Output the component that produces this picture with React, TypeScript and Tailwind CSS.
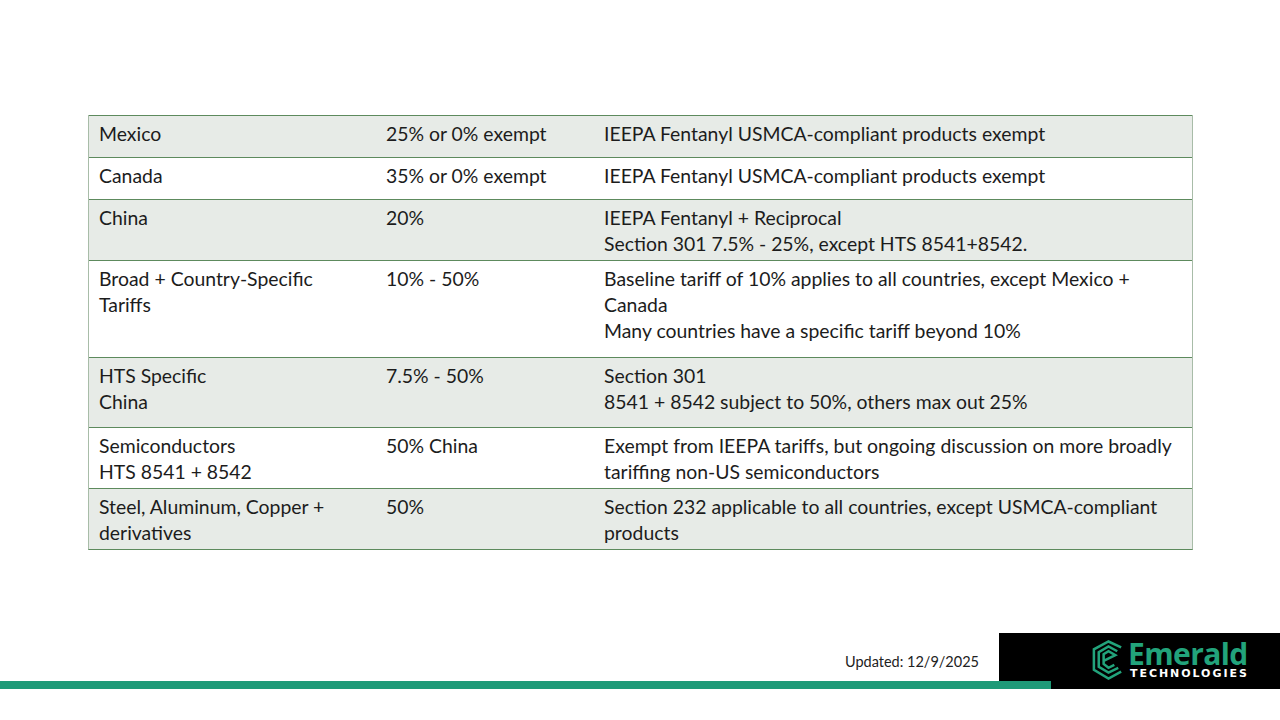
import React from 'react';

const rows = [
  { h: 'h-[42px]', a: ['Mexico'], b: ['25% or 0% exempt'], c: ['IEEPA Fentanyl USMCA-compliant products exempt'], shade: true },
  { h: 'h-[42px]', a: ['Canada'], b: ['35% or 0% exempt'], c: ['IEEPA Fentanyl USMCA-compliant products exempt'], shade: false },
  {
    h: 'h-[61px]',
    a: ['China'],
    b: ['20%'],
    c: ['IEEPA Fentanyl + Reciprocal', 'Section 301 7.5% - 25%, except HTS 8541+8542.'],
    shade: true,
  },
  {
    h: 'h-[97px]',
    a: ['Broad + Country-Specific Tariffs'],
    b: ['10% - 50%'],
    c: ['Baseline tariff of 10% applies to all countries, except Mexico + Canada', 'Many countries have a specific tariff beyond 10%'],
    shade: false,
  },
  {
    h: 'h-[70px]',
    a: ['HTS Specific', 'China'],
    b: ['7.5% - 50%'],
    c: ['Section 301', '8541 + 8542 subject to 50%, others max out 25%'],
    shade: true,
  },
  {
    h: 'h-[61px]',
    a: ['Semiconductors', 'HTS 8541 + 8542'],
    b: ['50% China'],
    c: ['Exempt from IEEPA tariffs, but ongoing discussion on more broadly tariffing non-US semiconductors'],
    shade: false,
  },
  {
    h: 'h-[61px]',
    a: ['Steel, Aluminum, Copper + derivatives'],
    b: ['50%'],
    c: ['Section 232 applicable to all countries, except USMCA-compliant products'],
    shade: true,
  },
];

const Lines = ({ items }: { items: string[] }) => (
  <>
    {items.map((t, i) => (
      <p key={i}>{t}</p>
    ))}
  </>
);

const Logo = () => (
  <div className="flex items-center gap-[1px]">
    <svg width="37" height="40" viewBox="0 0 38 40" fill="none" stroke="#22a37b" strokeWidth="2.6" strokeLinejoin="miter">
      <path d="M32 7 L19 1 L4 9 L4 30 L19 39 L32 32" />
      <path d="M28 11 L19 6 L9 12 L9 27 L19 33 L29 28" />
      <path d="M14 21 L26 15 L19 11 L14 14 L14 24 L19 28 L25 25" />
    </svg>
    <div className="flex flex-col">
      <span className="text-[30px] leading-[28px] font-bold text-[#22a37b] tracking-[-0.6px]" style={{ fontFamily: '"Open Sans", sans-serif' }}>
        Emerald
      </span>
      <span className="pl-[2px] text-[11px] leading-[12px] font-bold text-white tracking-[1.95px]" style={{ fontFamily: '"DejaVu Sans", sans-serif' }}>
        TECHNOLOGIES
      </span>
    </div>
  </div>
);

export default function App() {
  return (
    <div className="flex h-[720px] w-[1280px] flex-col bg-white font-['Lato',sans-serif] text-[#1c1c1c]">
      <div className="ml-[88px] mt-[115px] w-[1105px] border-x border-[#a8bca8] border-b border-b-[#5d8a5d]">
        {rows.map((r, i) => (
          <div
            key={i}
            className={`grid grid-cols-[287px_218px_1fr] border-t border-[#5d8a5d] pt-[5px] text-[19.4px] leading-[26px] ${r.h} ${r.shade ? 'bg-[#e7ebe7]' : 'bg-white'}`}
          >
            <div className="pl-[10px] pr-[30px]">
              <Lines items={r.a} />
            </div>
            <div className="pl-[10px]">
              <Lines items={r.b} />
            </div>
            <div className="pl-[10px] pr-[10px]">
              <Lines items={r.c} />
            </div>
          </div>
        ))}
      </div>
      <div className="flex-1" />
      <div className="mb-[31px] flex h-[56px] items-stretch">
        <div className="flex w-[999px] flex-col justify-end">
          <div className="pr-[20px] pb-[8px] text-right text-[14.5px] text-[#222]">Updated: 12/9/2025</div>
          <div className="relative z-10 h-[8px] w-[1051px] bg-[#1e9a78]" />
        </div>
        <div className="flex w-[281px] items-center bg-black pl-[91px] pb-[2px]">
          <Logo />
        </div>
      </div>
    </div>
  );
}
